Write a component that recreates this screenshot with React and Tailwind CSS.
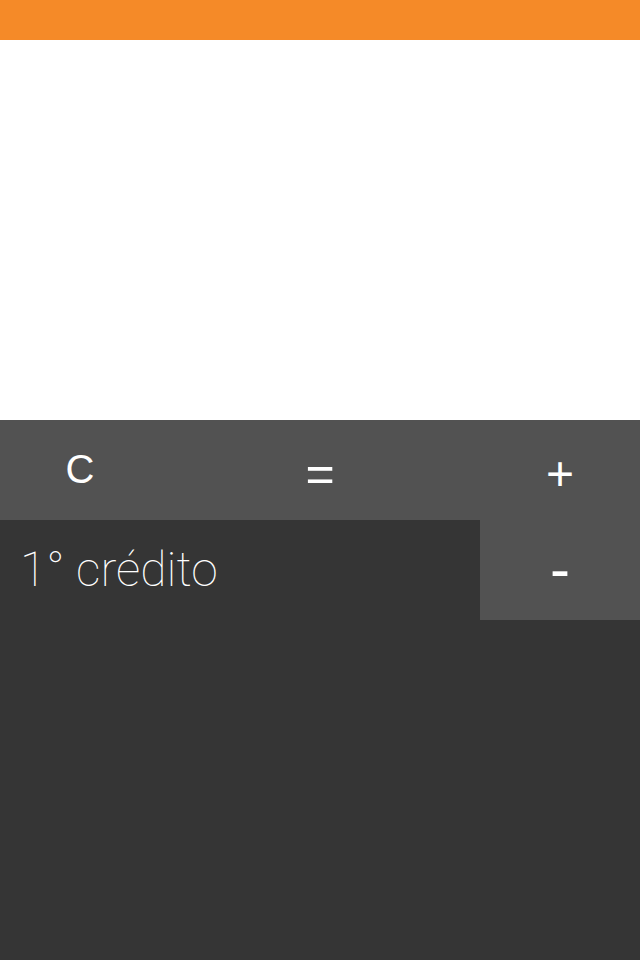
import React from "react";

function App() {
  return (
    <div className="flex flex-col w-[640px] h-[960px] bg-[#353535] font-['Liberation_Sans',sans-serif]">
      <div className="h-[40px] bg-[#f58a28]" />
      <div className="h-[380px] bg-white" />
      <div className="grid grid-cols-[160px_320px_160px] h-[100px] bg-[#525252] text-white">
        <button className="flex items-center justify-center pb-[2px] text-[40px]">C</button>
        <button className="flex items-center justify-center pt-[9px] text-[50px]">=</button>
        <button className="flex items-center justify-center pt-[7px] text-[48px]">+</button>
      </div>
      <div className="flex h-[100px]">
        <div className="flex-1 flex items-center pl-[20px] text-white text-[48px] font-thin font-['Roboto',sans-serif]">
          1° crédito
        </div>
        <button className="w-[160px] flex items-center justify-center bg-[#525252] text-white text-[60px] pb-[2px]">
          -
        </button>
      </div>
      <div className="flex-1" />
    </div>
  );
}

export default App;
